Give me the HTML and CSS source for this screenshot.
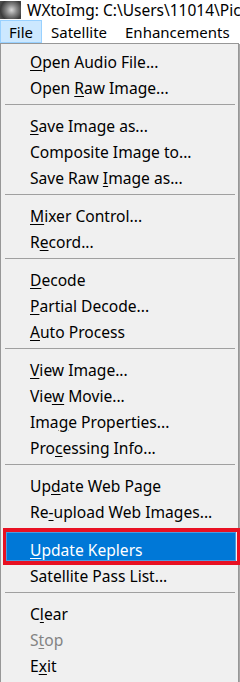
FILE: index.html
```html
<!DOCTYPE html>
<html lang="en">
<head>
    <meta charset="UTF-8">
    <title>WXtoImg</title>
    <link rel="stylesheet" href="styles.css">
</head>
<body>
    <div class="titlebar">
        <span class="appicon"></span>
        <span class="title">WXtoImg: C:\Users\11014\Pic</span>
    </div>
    <div class="menubar">
        <span class="menu open">File</span>
        <span class="menu">Satellite</span>
        <span class="menu">Enhancements</span>
    </div>

    <div class="dropdown">
        <div class="item"><u>O</u>pen Audio File...</div>
        <div class="item">Open <u>R</u>aw Image...</div>
        <div class="sep"></div>
        <div class="item"><u>S</u>ave Image as...</div>
        <div class="item">Composite Image to...</div>
        <div class="item">Save Raw <u>I</u>mage as...</div>
        <div class="sep"></div>
        <div class="item"><u>M</u>ixer Control...</div>
        <div class="item">R<u>e</u>cord...</div>
        <div class="sep"></div>
        <div class="item"><u>D</u>ecode</div>
        <div class="item"><u>P</u>artial Decode...</div>
        <div class="item"><u>A</u>uto Process</div>
        <div class="sep"></div>
        <div class="item"><u>V</u>iew Image...</div>
        <div class="item">Vie<u>w</u> Movie...</div>
        <div class="item">Ima<u>g</u>e Properties...</div>
        <div class="item">Pro<u>c</u>essing Info...</div>
        <div class="sep"></div>
        <div class="item">Up<u>d</u>ate Web Page</div>
        <div class="item">Re<u>-</u>upload Web Images...</div>
        <div class="sep"></div>
        <div class="item active"><u>U</u>pdate Keplers</div>
        <div class="item">Satellite Pass List...</div>
        <div class="sep"></div>
        <div class="item">C<u>l</u>ear</div>
        <div class="item disabled">S<u>t</u>op</div>
        <div class="item">E<u>x</u>it</div>
    </div>
</body>
</html>
```

FILE: styles.css
```css
body {
    margin: 0;
    width: 240px;
    height: 682px;
    overflow: hidden;
    background: #fff;
    font-family: "Noto Sans", "Liberation Sans", sans-serif;
    color: #000;
}
.titlebar {
    height: 20px;
    display: flex;
    align-items: center;
    white-space: nowrap;
    overflow: hidden;
}
.appicon {
    flex: none;
    width: 21px;
    height: 18px;
    margin-right: 6px;
    background: radial-gradient(circle at 55% 50%, #d8d8d8 0, #8a8a8a 35%, #3c3c3c 75%, #555 100%);
}
.title {
    font-size: 15.5px;
    line-height: 20px;
}
.menubar {
    height: 23px;
    display: flex;
    align-items: stretch;
    font-size: 15px;
}
.menu {
    display: flex;
    align-items: center;
    padding: 0 8px;
    border: 1px solid transparent;
}
.menu.open {
    background: #cce8ff;
    border-color: #99d1ff;
}
.dropdown {
    width: 237px;
    height: 636px;
    background: #f0f0f0;
    border: 1px solid #979797;
    box-shadow: 1px 1px 0 #a8a8a8;
    padding-top: 5px;
    box-sizing: content-box;
    font-size: 15.6px;
}
.item {
    position: relative;
    height: 26px;
    line-height: 26px;
    padding-left: 29px;
    white-space: nowrap;
}
.item u {
    text-underline-offset: 2px;
}
.item.disabled {
    color: #838383;
}
.item.active {
    background: #0078d7;
    color: #fff;
    margin: -5px 2px 2px 5px;
    padding-left: 23px;
    padding-top: 4px;
    border: 1px solid #4a9be0;
    height: 23px;
    line-height: 26px;
}
.item.active::after {
    content: "";
    position: absolute;
    left: -4px;
    right: -5px;
    top: -5px;
    bottom: -5px;
    border-style: solid;
    border-color: #e81123;
    border-width: 4px 3px;
}
.sep {
    height: 1px;
    margin: 3px 3px 8px 4px;
    background: #a0a0a0;
}
```
